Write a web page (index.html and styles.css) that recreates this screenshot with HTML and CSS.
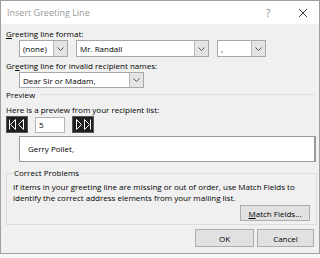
FILE: index.html
```html
<!DOCTYPE html>
<html lang="en">
<head>
  <meta charset="UTF-8">
  <title>Insert Greeting Line</title>
  <link rel="stylesheet" href="styles.css">
</head>
<body>
  <div class="dialog">
    <div class="titlebar">
      <span class="title">Insert Greeting Line</span>
      <span class="help">?</span>
      <span class="close">
        <svg width="10" height="10" viewBox="0 0 10 10"><path d="M1 1L9 9M9 1L1 9" stroke="#444" stroke-width="1" fill="none"/></svg>
      </span>
    </div>

    <div class="content">
      <div class="label"><u>G</u>reeting line format:</div>
      <div class="row indent">
        <div class="select sel-none"><span class="value">(none)</span><span class="arrow"><svg width="7" height="4" viewBox="0 0 7 4"><path d="M0.5 0.5L3.5 3.5L6.5 0.5" stroke="#555" fill="none"/></svg></span></div>
        <div class="select sel-name"><span class="value">Mr. Randall</span><span class="arrow"><svg width="7" height="4" viewBox="0 0 7 4"><path d="M0.5 0.5L3.5 3.5L6.5 0.5" stroke="#555" fill="none"/></svg></span></div>
        <div class="select sel-punct"><span class="value">,</span><span class="arrow"><svg width="7" height="4" viewBox="0 0 7 4"><path d="M0.5 0.5L3.5 3.5L6.5 0.5" stroke="#555" fill="none"/></svg></span></div>
      </div>

      <div class="label">Gr<u>e</u>eting line for invalid recipient names:</div>
      <div class="row indent second">
        <div class="select sel-invalid"><span class="value">Dear Sir or Madam,</span><span class="arrow"><svg width="7" height="4" viewBox="0 0 7 4"><path d="M0.5 0.5L3.5 3.5L6.5 0.5" stroke="#555" fill="none"/></svg></span></div>
      </div>

      <div class="section-title"><span>Preview</span><span class="rule"></span></div>
      <div class="label">Here is a preview from your recipient list:</div>
      <div class="row nav">
        <span class="navbtn">
          <svg width="18" height="11" viewBox="0 0 18 11"><path d="M1.5 0.5V10.5M7.5 0.5L2.5 5.5L7.5 10.5Z M15.5 0.5L10.5 5.5L15.5 10.5Z" stroke="#fff" fill="none"/></svg>
        </span>
        <span class="record">5</span>
        <span class="navbtn">
          <svg width="18" height="11" viewBox="0 0 18 11"><path d="M2.5 0.5L7.5 5.5L2.5 10.5Z M10.5 0.5L15.5 5.5L10.5 10.5Z M16.5 0.5V10.5" stroke="#fff" fill="none"/></svg>
        </span>
      </div>
      <div class="preview">Gerry Pollet,</div>

      <fieldset class="problems">
        <legend>Correct Problems</legend>
        <p>If items in your greeting line are missing or out of order, use Match Fields to identify the correct address elements from your mailing list.</p>
        <div class="row right">
          <button class="btn match"><u>M</u>atch Fields...</button>
        </div>
      </fieldset>

      <div class="row right footer">
        <button class="btn ok">OK</button>
        <button class="btn cancel">Cancel</button>
      </div>
    </div>
  </div>
</body>
</html>
```

FILE: styles.css
```css
* {
  box-sizing: border-box;
}
html, body {
  margin: 0;
}
body {
  width: 320px;
  height: 258px;
  overflow: hidden;
  background-color: #f7f7f7;
  font-family: "Open Sans", "Noto Sans", sans-serif;
  font-size: 8px;
  color: #000;
}
.dialog {
  width: 320px;
  height: 254px;
  background-color: #f0f0f0;
  border: 1px solid #a0a0a0;
  display: flex;
  flex-direction: column;
}
.titlebar {
  height: 23px;
  background-color: #fff;
  display: flex;
  align-items: center;
  padding-left: 6px;
  padding-right: 11px;
}
.title {
  flex: 1;
  color: #9a9a9a;
  font-size: 9px;
}
.help {
  width: 32px;
  color: #888;
  font-size: 10px;
}
.close {
  width: 10px;
  display: flex;
  align-items: center;
}
.content {
  flex: 1;
  padding: 4px 4px 0 5px;
  display: flex;
  flex-direction: column;
}
.label {
  height: 11px;
  line-height: 11px;
  white-space: nowrap;
}
.row {
  display: flex;
  align-items: center;
}
.indent {
  padding-left: 13px;
  margin-top: 1px;
  margin-bottom: 3px;
  gap: 8px;
}
.indent.second {
  margin-top: 1px;
  margin-bottom: 1px;
}
.select {
  height: 17px;
  background-color: #fff;
  border: 1px solid #a8a8a8;
  display: flex;
  align-items: stretch;
}
.select .value {
  flex: 1;
  line-height: 15px;
  padding-left: 3px;
  white-space: nowrap;
}
.select .arrow {
  width: 14px;
  background-color: #e4e4e4;
  border-left: 1px solid #b8b8b8;
  display: flex;
  align-items: center;
  justify-content: center;
}
.sel-none {
  width: 49px;
}
.sel-name {
  width: 133px;
}
.sel-punct {
  width: 49px;
}
.sel-invalid {
  width: 125px;
  height: 16px;
}
.section-title {
  display: flex;
  align-items: center;
  height: 11px;
  margin-bottom: 4px;
}
.rule {
  flex: 1;
  margin-left: 5px;
  border-top: 1px solid #dcdcdc;
}
.nav {
  margin-top: 1px;
  gap: 7px;
}
.navbtn {
  width: 22px;
  height: 17px;
  background-color: #1f1f1f;
  border: 1px solid #555;
  display: flex;
  align-items: center;
  justify-content: center;
}
.record {
  width: 30px;
  height: 16px;
  background-color: #fff;
  border: 1px solid #b4b4b4;
  line-height: 14px;
  padding-left: 3px;
}
.preview {
  margin: 3px 0 0 13px;
  width: 297px;
  height: 26px;
  background-color: #fff;
  border: 1px solid #9a9a9a;
  border-right-width: 2px;
  padding-left: 8px;
  line-height: 24px;
}
.problems {
  margin: 6px 0 0 0;
  width: 311px;
  height: 57px;
  border: 1px solid #dcdcdc;
  padding: 0 6px;
}
.problems legend {
  padding: 0 1px;
  line-height: 10px;
}
.problems p {
  margin: 3px 0 0 0;
  line-height: 11px;
}
.right {
  justify-content: flex-end;
}
.btn {
  font-family: inherit;
  font-size: 8px;
  color: #000;
  background-color: #e1e1e1;
  border: 1px solid #adadad;
  padding: 0;
}
.match {
  width: 70px;
  height: 16px;
  margin-top: 2px;
}
.footer {
  margin-top: 4px;
  gap: 3px;
  padding-right: 1px;
}
.ok {
  width: 59px;
  height: 18px;
}
.cancel {
  width: 57px;
  height: 18px;
}
```
